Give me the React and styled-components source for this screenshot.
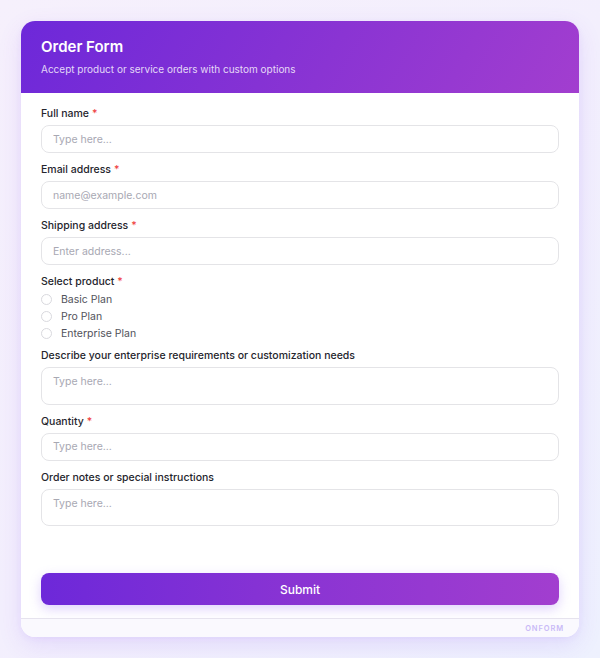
import React from "react";
import styled, { createGlobalStyle } from "styled-components";

const Global = createGlobalStyle`
  * { box-sizing: border-box; }
  html, body { margin: 0; padding: 0; }
  body {
    font-family: Inter, "Noto Sans", "Liberation Sans", sans-serif;
    background: linear-gradient(135deg, #f6f0fc 0%, #f3effd 50%, #eef1fe 100%);
    min-height: 658px;
    -webkit-font-smoothing: antialiased;
  }
`;

const Page = styled.div`
  padding: 21px 21px;
  min-height: 658px;
`;

const Card = styled.div`
  background: #ffffff;
  border-radius: 14px;
  overflow: hidden;
  box-shadow: 0 8px 24px rgba(124, 58, 237, 0.12), 0 2px 6px rgba(124, 58, 237, 0.06);
  display: flex;
  flex-direction: column;
`;

const Header = styled.div`
  height: 72px;
  padding: 17px 20px 0;
  background: linear-gradient(120deg, #6d28d9 0%, #8a34d3 55%, #a23ecf 100%);
  color: #fff;
`;

const Title = styled.h1`
  margin: 0;
  font-size: 15px;
  line-height: 18px;
  font-weight: 600;
`;

const Subtitle = styled.p`
  margin: 7px 0 0;
  font-size: 10px;
  line-height: 13px;
  color: rgba(255, 255, 255, 0.82);
`;

const Body = styled.form`
  padding: 14px 20px 13px;
  display: flex;
  flex-direction: column;
  gap: 10px;
`;

const Field = styled.div`
  display: flex;
  flex-direction: column;
`;

const Label = styled.label`
  font-size: 10.5px;
  line-height: 13px;
  font-weight: 500;
  color: #25252d;
  margin-bottom: ${(p) => (p.$tight ? "3px" : "5px")};
`;

const Req = styled.span`
  color: #ef4444;
  margin-left: 3px;
`;

const Input = styled.input`
  height: 28px;
  width: 100%;
  border: 1.5px solid #e4e4e7;
  border-radius: 8px;
  padding: 0 11px;
  font-family: inherit;
  font-size: 10.5px;
  color: #27272a;
  outline: none;
  &::placeholder { color: #a8a8b3; }
`;

const TextArea = styled.textarea`
  height: 37.5px;
  width: 100%;
  border: 1.5px solid #e4e4e7;
  border-radius: 8px;
  padding: 7px 11px;
  font-family: inherit;
  font-size: 10.5px;
  line-height: 13px;
  resize: none;
  outline: none;
  &::placeholder { color: #a8a8b3; }
`;

const RadioGroup = styled.div`
  display: flex;
  flex-direction: column;
  margin-bottom: -3px;
`;

const RadioRow = styled.label`
  height: 17px;
  display: flex;
  align-items: center;
  gap: 9px;
  font-size: 10.5px;
  color: #52525b;
`;

const Circle = styled.span`
  width: 11px;
  height: 11px;
  border-radius: 50%;
  border: 1.5px solid #d9d9de;
  background: #fff;
`;

const Submit = styled.button`
  margin-top: 37px;
  height: 32px;
  width: 100%;
  border: none;
  border-radius: 8px;
  background: linear-gradient(90deg, #6d28d9 0%, #8a34d3 50%, #a23ecf 100%);
  color: #fff;
  font-family: inherit;
  font-size: 12px;
  font-weight: 500;
  box-shadow: 0 4px 12px rgba(139, 92, 246, 0.28);
`;

const Footer = styled.div`
  height: 19px;
  border-top: 1px solid #e6e3ee;
  background: #faf9fe;
  display: flex;
  align-items: center;
  justify-content: flex-end;
  padding-right: 15px;
  font-size: 7.5px;
  font-weight: 600;
  letter-spacing: 0.9px;
  color: #c9b9f7;
`;

const TextField = ({ label, required, placeholder }) => (
  <Field>
    <Label>
      {label}
      {required && <Req>*</Req>}
    </Label>
    <Input placeholder={placeholder} />
  </Field>
);

const AreaField = ({ label, required }) => (
  <Field>
    <Label>
      {label}
      {required && <Req>*</Req>}
    </Label>
    <TextArea placeholder="Type here..." />
  </Field>
);

export default function App() {
  return (
    <>
      <Global />
      <Page>
        <Card>
          <Header>
            <Title>Order Form</Title>
            <Subtitle>Accept product or service orders with custom options</Subtitle>
          </Header>
          <Body onSubmit={(e) => e.preventDefault()}>
            <TextField label="Full name" required placeholder="Type here..." />
            <TextField label="Email address" required placeholder="name@example.com" />
            <TextField label="Shipping address" required placeholder="Enter address..." />
            <Field>
              <Label $tight>
                Select product<Req>*</Req>
              </Label>
              <RadioGroup>
                {["Basic Plan", "Pro Plan", "Enterprise Plan"].map((o) => (
                  <RadioRow key={o}>
                    <Circle />
                    {o}
                  </RadioRow>
                ))}
              </RadioGroup>
            </Field>
            <AreaField label="Describe your enterprise requirements or customization needs" />
            <TextField label="Quantity" required placeholder="Type here..." />
            <AreaField label="Order notes or special instructions" />
            <Submit type="submit">Submit</Submit>
          </Body>
          <Footer>ONFORM</Footer>
        </Card>
      </Page>
    </>
  );
}
